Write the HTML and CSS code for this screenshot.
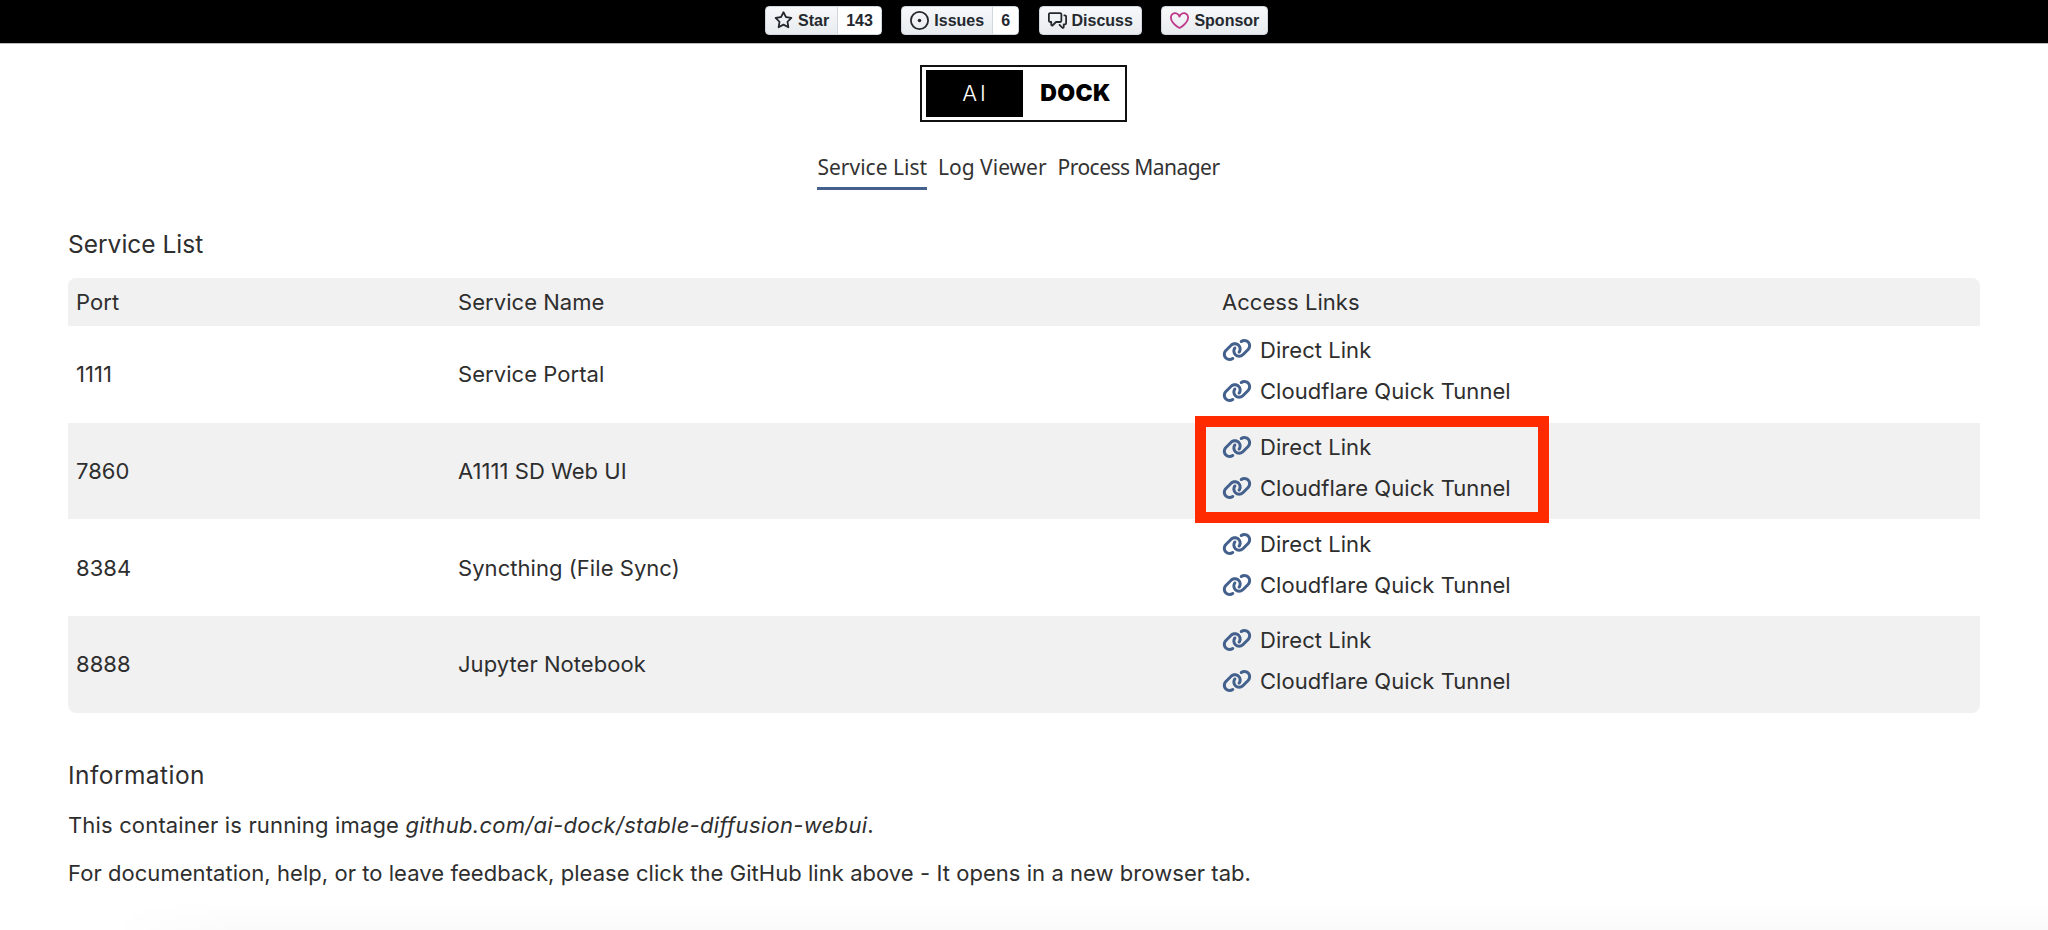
FILE: index.html
```html
<!DOCTYPE html>
<html lang="en">
<head>
<meta charset="utf-8">
<title>AI Dock Service Portal</title>
<link rel="stylesheet" href="styles.css">
</head>
<body>
<header class="topbar">
  <div class="gh">
    <span class="gh-btn"><span class="gh-main"><svg class="gh-ico" viewBox="0 0 16 16"><path d="M8 .25a.75.75 0 0 1 .673.418l1.882 3.815 4.21.612a.75.75 0 0 1 .416 1.279l-3.046 2.97.719 4.192a.751.751 0 0 1-1.088.791L8 12.347l-3.766 1.98a.75.75 0 0 1-1.088-.79l.72-4.194L.818 6.374a.75.75 0 0 1 .416-1.28l4.21-.611L7.327.668A.75.75 0 0 1 8 .25Zm0 2.445L6.615 5.5a.75.75 0 0 1-.564.41l-3.097.45 2.24 2.184a.75.75 0 0 1 .216.664l-.528 3.084 2.769-1.456a.75.75 0 0 1 .698 0l2.77 1.456-.53-3.084a.75.75 0 0 1 .216-.664l2.24-2.183-3.096-.45a.75.75 0 0 1-.564-.41L8 2.694Z"/></svg>Star</span><span class="gh-count">143</span></span>
    <span class="gh-btn"><span class="gh-main"><svg class="gh-ico" viewBox="0 0 16 16"><path d="M8 9.5a1.5 1.5 0 1 0 0-3 1.5 1.5 0 0 0 0 3Z"/><path d="M8 0a8 8 0 1 1 0 16A8 8 0 0 1 8 0ZM1.5 8a6.5 6.5 0 1 0 13 0 6.5 6.5 0 0 0-13 0Z"/></svg>Issues</span><span class="gh-count">6</span></span>
    <span class="gh-btn"><span class="gh-main"><svg class="gh-ico" viewBox="0 0 16 16"><path d="M1.75 1h8.5c.966 0 1.75.784 1.75 1.75v5.5A1.75 1.75 0 0 1 10.25 10H7.061l-2.574 2.573A1.458 1.458 0 0 1 2 11.543V10h-.25A1.75 1.75 0 0 1 0 8.25v-5.5C0 1.784.784 1 1.75 1ZM1.5 2.75v5.5c0 .138.112.25.25.25h1a.75.75 0 0 1 .75.75v2.19l2.72-2.72a.749.749 0 0 1 .53-.22h3.5a.25.25 0 0 0 .25-.25v-5.5a.25.25 0 0 0-.25-.25h-8.5a.25.25 0 0 0-.25.25Zm13 2a.25.25 0 0 0-.25-.25h-.5a.75.75 0 0 1 0-1.5h.5c.966 0 1.75.784 1.75 1.75v5.5A1.75 1.75 0 0 1 14.25 12H14v1.543a1.458 1.458 0 0 1-2.487 1.03L9.22 12.28a.749.749 0 0 1 .326-1.275.749.749 0 0 1 .734.215l2.22 2.22v-2.19a.75.75 0 0 1 .75-.75h1a.25.25 0 0 0 .25-.25Z"/></svg>Discuss</span></span>
    <span class="gh-btn"><span class="gh-main"><svg class="gh-ico gh-heart" viewBox="0 0 16 16"><path d="m8 14.25.345.666a.75.75 0 0 1-.69 0l-.008-.004-.018-.01a7.152 7.152 0 0 1-.31-.17 22.055 22.055 0 0 1-3.434-2.414C2.045 10.731 0 8.35 0 5.5 0 2.836 2.086 1 4.25 1 5.797 1 7.153 1.802 8 3.02 8.847 1.802 10.203 1 11.75 1 13.914 1 16 2.836 16 5.5c0 2.85-2.045 5.231-3.885 6.818a22.066 22.066 0 0 1-3.744 2.584l-.018.01-.006.003h-.002ZM4.25 2.5c-1.336 0-2.75 1.164-2.75 3 0 2.15 1.58 4.144 3.365 5.682A20.58 20.58 0 0 0 8 13.393a20.58 20.58 0 0 0 3.135-2.211C12.92 9.644 14.5 7.65 14.5 5.5c0-1.836-1.414-3-2.75-3-1.373 0-2.609.986-3.029 2.456a.749.749 0 0 1-1.442 0C6.859 3.486 5.623 2.5 4.25 2.5Z"/></svg>Sponsor</span></span>
  </div>
</header>

<div class="logo-row">
  <div class="logo"><span class="logo-ai">AI</span><span class="logo-dock">DOCK</span></div>
</div>

<nav class="tabs">
  <a class="tab tab-active">Service List</a>
  <a class="tab">Log Viewer</a>
  <a class="tab tab-tight">Process Manager</a>
</nav>

<main class="content">
  <h2 class="title">Service List</h2>
  <div class="tablewrap">
  <table class="services">
    <thead>
      <tr><th class="c1">Port</th><th class="c2">Service Name</th><th>Access Links</th></tr>
    </thead>
    <tbody>
      <tr><td>1111</td><td>Service Portal</td><td class="links"><a class="lnk"><svg class="chain" viewBox="0 0 640 512"><use href="#chain"/></svg>Direct Link</a><a class="lnk"><svg class="chain" viewBox="0 0 640 512"><use href="#chain"/></svg>Cloudflare Quick Tunnel</a></td></tr>
      <tr><td>7860</td><td>A1111 SD Web UI</td><td class="links"><a class="lnk"><svg class="chain" viewBox="0 0 640 512"><use href="#chain"/></svg>Direct Link</a><a class="lnk"><svg class="chain" viewBox="0 0 640 512"><use href="#chain"/></svg>Cloudflare Quick Tunnel</a></td></tr>
      <tr><td>8384</td><td>Syncthing (File Sync)</td><td class="links"><a class="lnk"><svg class="chain" viewBox="0 0 640 512"><use href="#chain"/></svg>Direct Link</a><a class="lnk"><svg class="chain" viewBox="0 0 640 512"><use href="#chain"/></svg>Cloudflare Quick Tunnel</a></td></tr>
      <tr><td>8888</td><td>Jupyter Notebook</td><td class="links"><a class="lnk"><svg class="chain" viewBox="0 0 640 512"><use href="#chain"/></svg>Direct Link</a><a class="lnk"><svg class="chain" viewBox="0 0 640 512"><use href="#chain"/></svg>Cloudflare Quick Tunnel</a></td></tr>
    </tbody>
  </table>
  </div>
  <h2 class="title title-info">Information</h2>
  <p class="info info-lead">This container is running image <em>github.com/ai-dock/stable-diffusion-webui</em>.</p>
  <p class="info">For documentation, help, or to leave feedback, please click the GitHub link above - It opens in a new browser tab.</p>
</main>

<div class="highlight"></div>
<div class="glow"></div>

<svg class="defs" width="0" height="0"><defs><symbol id="chain" viewBox="0 0 640 512"><path d="M172.5 131.1C228.1 75.51 320.5 75.51 376.1 131.1C426.1 181.1 433.5 260.8 392.4 318.3L391.3 319.9C381 334.2 361 337.6 346.7 327.3C332.3 317 328.9 297 339.2 282.7L340.3 281.1C363.2 249 359.6 205.1 331.7 177.2C300.3 145.8 249.2 145.8 217.7 177.2L105.5 289.5C73.99 320.1 73.99 372 105.5 403.5C133.3 431.4 177.3 435 209.3 412.1L210.9 410.1C225.3 400.7 245.3 404 255.5 418.4C265.8 432.8 262.5 452.8 248.1 463.1L246.5 464.2C188.1 505.3 110.2 498.7 60.21 448.8C3.741 392.3 3.741 300.7 60.21 244.3L172.5 131.1zM467.5 380C411 436.5 319.5 436.5 263 380C213 330 206.5 251.2 247.6 193.7L248.7 192.1C258.1 177.8 278.1 174.4 293.3 184.7C307.7 194.1 311.1 214.1 300.8 229.3L299.7 230.9C276.8 262.1 280.4 306.9 308.3 334.8C339.7 366.2 390.8 366.2 422.3 334.8L534.5 222.5C566 191 566 139.1 534.5 108.5C506.7 80.63 462.7 76.99 430.7 99.9L429.1 101C414.7 111.3 394.7 107.1 384.5 93.58C374.2 79.2 377.5 59.21 391.9 48.94L393.5 47.82C451 6.731 529.8 13.25 579.8 63.24C636.3 119.7 636.3 211.3 579.8 267.7L467.5 380z"/></symbol></defs></svg>
</body>
</html>
```
FILE: styles.css
```css
* { box-sizing: border-box; }
html, body { margin: 0; padding: 0; }
body {
  width: 2048px;
  height: 930px;
  overflow: hidden;
  position: relative;
  background: #fff;
  color: #2e2e2e;
  font-family: "Inter", "Open Sans", sans-serif;
  font-size: 22px;
  letter-spacing: .05px;
}
.topbar {
  height: 44px;
  background: #000;
  border-bottom: 1px solid #bbb;
  display: flex;
  align-items: flex-start;
  padding-top: 6px;
  padding-left: 765px;
}
.gh { display: flex; gap: 19.5px; }
.gh-btn {
  display: flex;
  height: 29px;
  border-radius: 4px;
  border: 1px solid #d0d7de;
  background: linear-gradient(#f6f8fa, #e9ecef);
  font: 600 16px/27px "Liberation Sans", sans-serif;
  letter-spacing: 0;
  color: #24292f;
  overflow: hidden;
}
.gh-main { display: flex; align-items: center; gap: 5px; padding: 0 8px; }
.gh-count { background: #fff; padding: 0 8px; border-left: 1px solid #d0d7de; }
.gh-ico { width: 19px; height: 19px; fill: #24292f; flex: none; }
.gh-heart { fill: #bf3989; }
.logo-row { display: flex; justify-content: center; margin-top: 21px; padding-right: 1px; }
.logo {
  width: 207px;
  height: 57px;
  border: 2px solid #111;
  padding: 3px 4px;
  display: flex;
  align-items: stretch;
}
.logo-ai {
  width: 97px;
  background: #000;
  color: #fff;
  font: 300 22px/47px "Inter", sans-serif;
  letter-spacing: 3px;
  text-align: center;
  padding-left: 2px;
}
.logo-dock {
  flex: 1;
  color: #000;
  font: 900 23px/47px "Inter", sans-serif;
  text-align: center;
  letter-spacing: .4px;
  padding-left: 7px;
}
.tabs {
  display: flex;
  justify-content: center;
  gap: 11px;
  margin-top: 28px;
  padding-right: 11px;
  font-family: "Noto Sans", sans-serif;
  font-size: 21px;
  letter-spacing: 0;
}
.tab { padding: 0 0 2px; line-height: 35px; color: #333; border-bottom: 3px solid transparent; }
.tab-active { border-bottom-color: #44608c; }
.tab-tight { letter-spacing: -.55px; }
.content { padding: 0 68px; margin-top: 37px; }
.title { margin: 0; font-size: 24.5px; font-weight: 400; line-height: 34px; letter-spacing: 0; }
.tablewrap { margin-top: 17px; border-radius: 8px; overflow: hidden; }
.services { width: 100%; border-collapse: collapse; table-layout: fixed; }
.services th { font-weight: 400; text-align: left; padding: 0 8px; height: 48px; background: #f1f1f1; }
.services td { padding: 0 8px; height: 96.67px; }
.services td.links { padding-bottom: 7px; }
.c1 { width: 382px; }
.c2 { width: 764px; }
.services tbody tr:nth-child(even) td { background: #f1f1f1; }
.lnk { display: flex; align-items: center; height: 41px; }
.chain { width: 30px; height: 24px; fill: #44608c; margin-right: 8px; flex: none; }
.title-info { margin-top: 45px; letter-spacing: .45px; }
.info { margin: 17px 0 0; line-height: 33px; }
.info + .info { margin-top: 15px; }
.info-lead { letter-spacing: .16px; }
.info-lead em { letter-spacing: .3px; }
.highlight {
  position: absolute;
  left: 1195px;
  top: 416px;
  width: 354px;
  height: 107px;
  border: 11px solid #ff2a00;
}
.glow {
  position: absolute;
  left: 0;
  right: 0;
  bottom: 0;
  height: 30px;
  background: linear-gradient(rgba(0,0,0,0), rgba(0,0,0,.02));
  -webkit-mask-image: linear-gradient(to right, transparent 110px, #000 240px);
  mask-image: linear-gradient(to right, transparent 110px, #000 240px);
}
.defs { position: absolute; }
```
